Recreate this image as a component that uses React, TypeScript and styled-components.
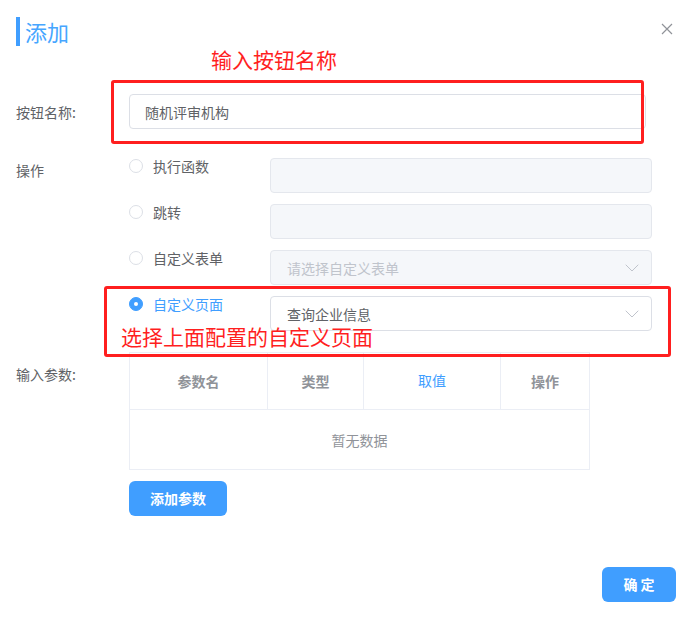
import { type FC } from 'react';
import styled, { createGlobalStyle } from 'styled-components';
import { ChevronDown } from 'lucide-react';

const GlobalStyle = createGlobalStyle`
  html, body {
    margin: 0;
    padding: 0;
    background: #fff;
  }
  body {
    font-family: 'Noto Sans CJK SC', 'Noto Sans', 'Liberation Sans', sans-serif;
    -webkit-font-smoothing: antialiased;
  }
  * {
    box-sizing: border-box;
  }
`;

const Dialog = styled.div`
  position: relative;
  width: 685px;
  height: 621px;
  background: #fff;
`;

const Header = styled.div`
  display: flex;
  justify-content: space-between;
  align-items: flex-start;
  padding: 17px 12px 0 16px;
`;

const Title = styled.h2`
  margin: 0;
  border-left: 4px solid #409eff;
  padding-left: 5px;
  height: 29px;
  font-size: 22px;
  line-height: 29px;
  font-weight: 400;
  color: #46a6ff;
`;

const CloseButton = styled.button`
  margin-top: 6px;
  padding: 0;
  border: none;
  background: none;
  width: 12px;
  height: 12px;
  display: flex;
  color: #909399;
  cursor: pointer;
`;

const Form = styled.div`
  padding: 48px 0 0 16px;
`;

const FormItem = styled.div<{ $center?: boolean; $gap?: number }>`
  display: flex;
  align-items: ${(p) => (p.$center ? 'center' : 'flex-start')};
  margin-top: ${(p) => p.$gap ?? 0}px;
`;

const Label = styled.label<{ $offset?: number }>`
  flex: 0 0 113px;
  padding-top: ${(p) => p.$offset ?? 0}px;
  font-size: 14px;
  line-height: 20px;
  color: #606266;
`;

const TextInput = styled.div`
  width: 517px;
  height: 35px;
  border: 1px solid #dcdfe6;
  border-radius: 4px;
  padding: 0 15px;
  display: flex;
  align-items: center;
  font-size: 14px;
  color: #606266;
`;

const OptionGroup = styled.div`
  width: 523px;
  display: flex;
  flex-direction: column;
  gap: 11px;
`;

const OptionRow = styled.div`
  display: grid;
  grid-template-columns: 141px 1fr;
`;

const RadioLabel = styled.div<{ $checked?: boolean }>`
  display: flex;
  align-items: center;
  gap: 10px;
  height: 16px;
  font-size: 14px;
  line-height: 16px;
  color: ${(p) => (p.$checked ? '#409eff' : '#606266')};
`;

const RadioDot = styled.span<{ $checked?: boolean }>`
  position: relative;
  width: 14px;
  height: 14px;
  border-radius: 50%;
  border: 1px solid ${(p) => (p.$checked ? '#409eff' : '#dcdfe6')};
  background: ${(p) => (p.$checked ? '#409eff' : '#fff')};

  &::after {
    content: '';
    position: absolute;
    left: 50%;
    top: 50%;
    width: 4px;
    height: 4px;
    border-radius: 50%;
    background: #fff;
    transform: translate(-50%, -50%);
    display: ${(p) => (p.$checked ? 'block' : 'none')};
  }
`;

const Field = styled.div<{ $disabled?: boolean }>`
  height: 35px;
  border: 1px solid ${(p) => (p.$disabled ? '#e4e7ed' : '#dcdfe6')};
  background: ${(p) => (p.$disabled ? '#f5f7fa' : '#fff')};
  border-radius: 4px;
  padding: 0 7px 0 16px;
  display: flex;
  align-items: center;
  justify-content: space-between;
  font-size: 14px;
  color: ${(p) => (p.$disabled ? '#c0c4cc' : '#606266')};
`;

const Table = styled.div`
  width: 461px;
  border: 1px solid #ebeef5;
`;

const TableHead = styled.div`
  display: grid;
  grid-template-columns: 138px 96px 137px 1fr;
  height: 57px;
  border-bottom: 1px solid #ebeef5;
`;

const HeadCell = styled.div<{ $active?: boolean }>`
  display: flex;
  align-items: center;
  justify-content: center;
  font-size: 14px;
  font-weight: ${(p) => (p.$active ? 400 : 700)};
  color: ${(p) => (p.$active ? '#409eff' : '#909399')};
  padding-bottom: ${(p) => (p.$active ? 3 : 0)}px;

  &:not(:last-child) {
    border-right: 1px solid #ebeef5;
  }
`;

const Empty = styled.div`
  height: 59px;
  display: flex;
  align-items: center;
  justify-content: center;
  font-size: 14px;
  color: #909399;
`;

const Button = styled.button<{ $width: number }>`
  width: ${(p) => p.$width}px;
  height: 35px;
  padding: 0 0 2px;
  border: none;
  border-radius: 6px;
  background: #409eff;
  color: #fff;
  font-family: inherit;
  font-size: 14px;
  font-weight: 700;
  cursor: pointer;
`;

const ParamsColumn = styled.div`
  display: flex;
  flex-direction: column;
  align-items: flex-start;
  gap: 11px;
`;

const Footer = styled.div`
  display: flex;
  justify-content: flex-end;
  padding: 51px 9px 0 0;
`;

const NoteBox = styled.div`
  position: absolute;
  border: 3px solid #ff1f1f;
  border-radius: 3px;
  pointer-events: none;
`;

const NoteText = styled.div`
  position: absolute;
  font-size: 21px;
  line-height: 24px;
  color: #ff1f1f;
  white-space: nowrap;
  pointer-events: none;
`;

const options = [
  { label: '执行函数', kind: 'input' },
  { label: '跳转', kind: 'input' },
  { label: '自定义表单', kind: 'select', placeholder: '请选择自定义表单' },
  { label: '自定义页面', kind: 'select', value: '查询企业信息', checked: true },
];

const App: FC = () => {
  return (
    <Dialog>
      <GlobalStyle />
      <Header>
        <Title>添加</Title>
        <CloseButton aria-label="关闭">
          <svg width="12" height="12" viewBox="0 0 12 12">
            <path d="M1 1L11 11M11 1L1 11" stroke="currentColor" strokeWidth="1.2" />
          </svg>
        </CloseButton>
      </Header>

      <Form>
        <FormItem $center>
          <Label>按钮名称:</Label>
          <TextInput>随机评审机构</TextInput>
        </FormItem>

        <FormItem $gap={29}>
          <Label $offset={2}>操作</Label>
          <OptionGroup>
            {options.map((opt) => (
              <OptionRow key={opt.label}>
                <RadioLabel $checked={opt.checked}>
                  <RadioDot $checked={opt.checked} />
                  {opt.label}
                </RadioLabel>
                <Field $disabled={!opt.checked}>
                  <span>{opt.value ?? opt.placeholder ?? ''}</span>
                  {opt.kind === 'select' && <ChevronDown size={24} strokeWidth={1} color="#c0c4cc" />}
                </Field>
              </OptionRow>
            ))}
          </OptionGroup>
        </FormItem>

        <FormItem $gap={21}>
          <Label $offset={12}>输入参数:</Label>
          <ParamsColumn>
            <Table>
              <TableHead>
                <HeadCell>参数名</HeadCell>
                <HeadCell>类型</HeadCell>
                <HeadCell $active>取值</HeadCell>
                <HeadCell>操作</HeadCell>
              </TableHead>
              <Empty>暂无数据</Empty>
            </Table>
            <Button $width={98}>添加参数</Button>
          </ParamsColumn>
        </FormItem>
      </Form>

      <Footer>
        <Button $width={74}>确 定</Button>
      </Footer>

      <NoteText style={{ left: 211, top: 47 }}>输入按钮名称</NoteText>
      <NoteBox style={{ left: 111, top: 80, width: 533, height: 64 }} />
      <NoteBox style={{ left: 104, top: 286, width: 567, height: 71 }} />
      <NoteText style={{ left: 121, top: 324 }}>选择上面配置的自定义页面</NoteText>
    </Dialog>
  );
};

export default App;
